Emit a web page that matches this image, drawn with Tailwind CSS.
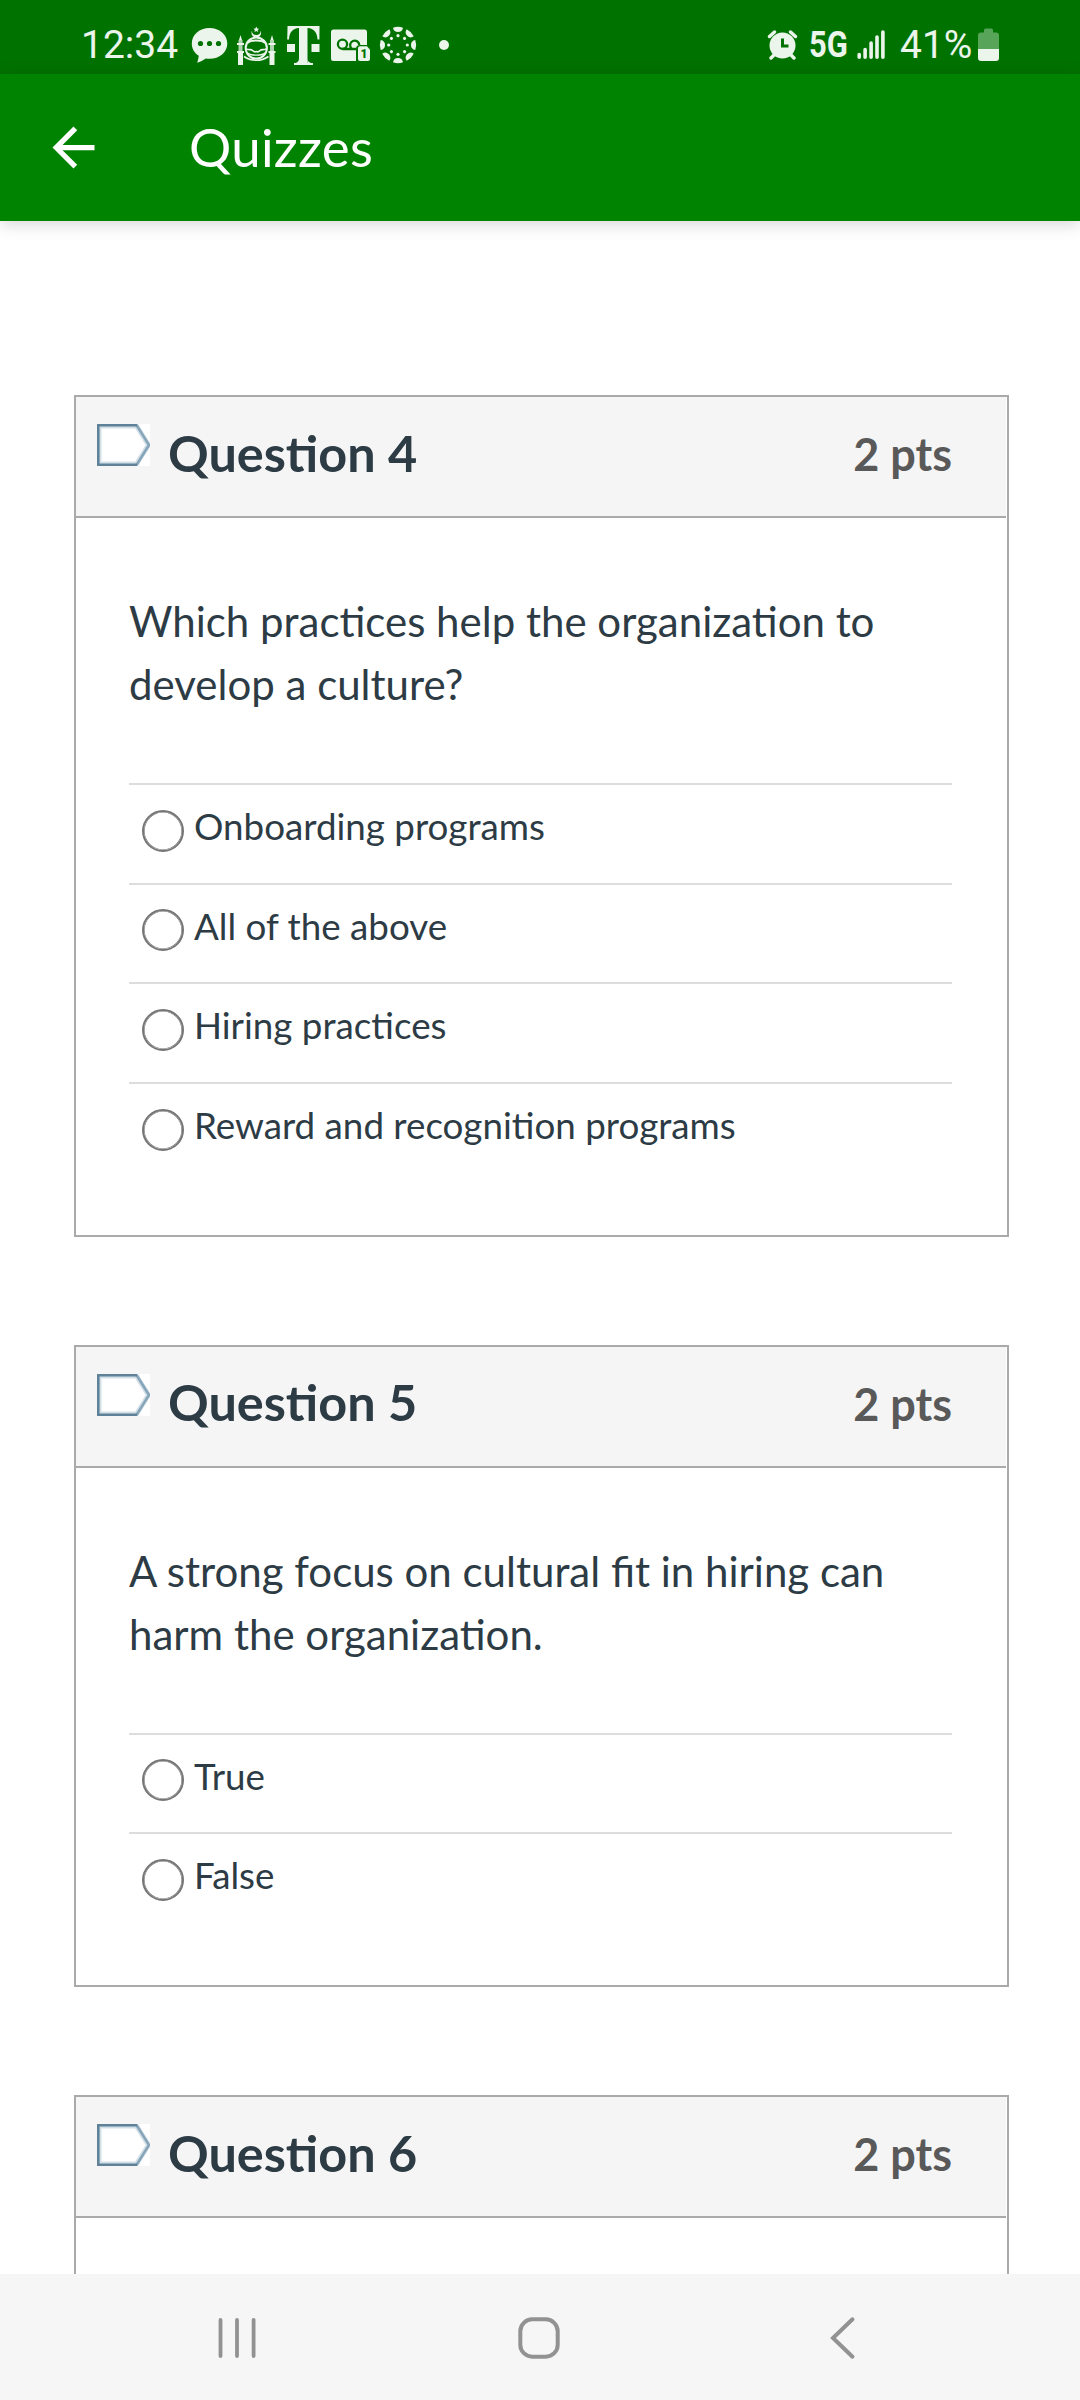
<!DOCTYPE html>
<html lang="en">
<head>
<meta charset="utf-8">
<title>Quizzes</title>
<script src="https://cdn.jsdelivr.net/npm/@tailwindcss/browser@4"></script>
</head>
<body class="bg-white">
<div class="flex h-[2400px] w-[1080px] flex-col overflow-hidden bg-white font-['Lato',sans-serif] text-[#2d3b45]">

  <!-- Status bar -->
  <div class="flex h-[74px] shrink-0 items-start bg-[#007200] font-['Roboto',sans-serif] text-[#ebf5eb]">
    <span class="ml-[81px] mt-[21px] w-[110px] whitespace-nowrap text-[39px] leading-[48px]">12:34</span>
    <svg class="mt-[27px] h-[37px] w-[37px] shrink-0" viewBox="0 0 37 37" fill="currentColor">
      <path d="M18.500 1C8.500 1 .8 7.500.8 16.500c0 5.500 2.700 9.500 7 12.200-.3 2.500-.8 4.700-1.600 7.100 3-.8 6-2.300 8.600-4.200 1.200.2 2.500.2 3.700.2 10 0 17.800-6.500 17.800-15.300S28.500 1 18.500 1z"/>
      <g fill="#007200"><circle cx="9.500" cy="16.500" r="2.600"/><circle cx="18.500" cy="16.500" r="2.600"/><circle cx="27.500" cy="16.500" r="2.600"/></g>
    </svg>
    <svg class="ml-[9px] mt-[26px] h-[40px] w-[39px] shrink-0" viewBox="0 0 39 40" fill="none" stroke="currentColor">
      <g fill="currentColor" stroke="none">
        <path d="M1 26h5v13H1zM32.500 26h5v13h-5z"/>
        <path d="M1.500 14h4v11h-4zM33 14h4v11h-4z" fill-opacity=".75"/>
        <path d="M0 17h7v2H0zM31.500 17h7v2h-7zM0 25h7v2H0zM31.500 25h7v2h-7z"/>
        <path d="M3.500 9l1.500 5H2zM35 9l1.500 5h-3z"/>
        <path d="M19.300 .5l.9 2 2 .2-1.500 1.400.5 2-1.900-1.100-1.900 1.100.5-2-1.500-1.400 2-.2z"/>
        <path d="M15 4.500c-1.500 4 .5 7 4.300 7s5.800-3 4.300-7c.2 3-1.600 4.500-4.300 4.500S14.800 7.500 15 4.500z"/>
      </g>
      <ellipse cx="19.300" cy="22" rx="10.600" ry="10.600" stroke-width="2"/>
      <path d="M10.500 17c3-3.500 14.600-3.500 17.600 0" stroke-width="2"/>
      <path d="M9 22.500c2.500 2.500 4.500 0 6.500 2s2.500 1.200 3.800 1.200 1.800.8 3.800-1.200 4 .5 6.500-2" stroke-width="1.700"/>
      <path d="M10 26.500c3 3.500 15.600 3.500 18.600 0" stroke-width="1.200"/>
      <path d="M7 30.500c7.500 5 17 5 24.500 0" stroke-width="1.600"/>
    </svg>
    <svg class="ml-[11px] mt-[26px] h-[39px] w-[33px] shrink-0" viewBox="0 0 33 39" fill="currentColor">
      <rect x=".5" y="0" width="32" height="2"/>
      <rect x="12" y="0" width="8.500" height="37"/>
      <rect x="7" y="37" width="19" height="2"/>
      <path d="M.5 2H12C5.500 2.500 2.500 6 2 13.500H.2zM32.500 2H20.500c6.500.5 9.500 4 10 11.500h1.900zM12 32c0 3.500-1.500 5-5 5h5zM20.500 32c0 3.500 1.500 5 5.500 5h-5.500z"/>
      <rect x="0" y="18" width="8" height="8"/>
      <rect x="24.500" y="18" width="8" height="8"/>
    </svg>
    <div class="relative ml-[11px] mt-[29px] h-[33px] w-[40px] shrink-0">
      <svg class="h-full w-full" viewBox="0 0 40 33" fill="currentColor">
        <path d="M2.500 .5h31a2.500 2.500 0 012.500 2.500V16H29a4 4 0 00-4 4v12H2.500a2.500 2.500 0 01-2.500-2.500V3a2.500 2.500 0 012.500-2.500z"/>
        <g fill="none" stroke="#007200" stroke-width="2.300"><circle cx="11.500" cy="15.300" r="4.600"/><path d="M11.500 20h14M20.500 19.500A4.600 4.600 0 1128.300 16"/></g>
        <path d="M29 17.300h7l3 3.500v9.200a2 2 0 01-2 2h-8a2 2 0 01-2-2V19.300a2 2 0 012-2z"/>
      </svg>
      <span class="absolute left-[28px] top-[18px] w-[10px] text-center text-[12px] font-black leading-[14px] text-[#007200]">1</span>
    </div>
    <svg class="ml-[8px] mt-[26px] h-[38px] w-[38px] shrink-0" viewBox="-19 -19 38 38" fill="currentColor">
      <g id="q"><path d="M-5-17.300Q0-19 5-17.300Q4.200-13 0-13T-5-17.300z"/><circle cx="0" cy="-9.300" r="1.600"/></g>
      <use href="#q" transform="rotate(45)"/><use href="#q" transform="rotate(90)"/><use href="#q" transform="rotate(135)"/><use href="#q" transform="rotate(180)"/><use href="#q" transform="rotate(225)"/><use href="#q" transform="rotate(270)"/><use href="#q" transform="rotate(315)"/>
    </svg>
    <span class="ml-[22px] mt-[40px] h-[10px] w-[10px] shrink-0 rounded-full bg-[#ebf5eb]"></span>
    <svg class="ml-auto mt-[29px] h-[31px] w-[31px] shrink-0" viewBox="0 0 31 31" fill="currentColor">
      <circle cx="15.500" cy="16.500" r="13"/>
      <path d="M2.500 7.500L7.500 3M28.500 7.500L23.500 3M4 29l4-4M27 29l-4-4" stroke="currentColor" stroke-width="3.400" stroke-linecap="round"/>
      <path d="M15.500 9.500v7.500h6" stroke="#007200" stroke-width="3" fill="none"/>
    </svg>
    <span class="ml-[11px] mt-[21px] w-[48px] whitespace-nowrap"><span class="inline-block origin-left scale-x-[0.86] text-[36px] font-bold leading-[48px]">5G</span></span>
    <svg class="mt-[29px] h-[31px] w-[29px] shrink-0" viewBox="0 0 29 31" stroke="currentColor" stroke-width="3.600" stroke-linecap="round">
      <path d="M2.200 25.500v2.700M8.100 20.500v7.700M14.100 14v14.200M20 8v20.200M25.900 3v25.200"/>
    </svg>
    <span class="ml-[14px] mt-[21px] w-[78px] whitespace-nowrap text-[39px] leading-[48px]">41%</span>
    <svg class="mr-[81px] mt-[28px] h-[33px] w-[21px] shrink-0" viewBox="0 0 21 33" fill="currentColor">
      <path d="M6 4.500V2a1.500 1.500 0 011.500-1.500h6A1.500 1.500 0 0115 2v2.500h3a3 3 0 013 3V21H0V7.500a3 3 0 013-3z" fill="#58a458"/>
      <path d="M0 21h21v9a3 3 0 01-3 3H3a3 3 0 01-3-3z"/>
    </svg>
  </div>

  <!-- App bar -->
  <div class="z-10 flex h-[147px] shrink-0 items-center bg-[#008300] text-white shadow-[0_3px_16px_rgba(0,0,0,0.17)]">
    <svg class="ml-[42px] h-[63px] w-[63px]" viewBox="0 0 24 24" fill="currentColor"><path d="M20 11H7.830l5.590-5.590L12 4l-8 8 8 8 1.410-1.410L7.830 13H20v-2z"/></svg>
    <h1 class="mb-[2px] ml-[84px] whitespace-nowrap text-[52.800px] leading-[64px] tracking-[0.3px]">Quizzes</h1>
  </div>

  <!-- Questions -->
  <main class="flex min-h-0 flex-1 flex-col gap-[108px] overflow-hidden pl-[74px] pr-[71px] pt-[174px]">

    <section class="h-[842px] shrink-0 border-2 border-[#aaa]">
      <div class="mr-px flex h-[121px] items-start border-b-2 border-[#aaa] bg-[#f5f5f5] pl-[21px] pr-[54px]">
        <svg class="mt-[27px] h-[42px] w-[53px]" viewBox="0 0 53 42"><path fill="#fff" d="M0 0h53v42H0z"/><path d="M2 2h37.500L51.500 21 39.500 40H2z" fill="none" stroke="#d3e0e8" stroke-width="5"/><path d="M39.500 1L52 21 39.500 41" fill="none" stroke="#86a5b8" stroke-width="2.500"/><path d="M40 1.300H1.300v39.400H40" fill="none" stroke="#5f8299" stroke-width="2.600"/></svg>
        <h2 class="ml-[18px] mt-[25px] whitespace-nowrap text-[50.400px] font-bold leading-[61px]">Question 4</h2>
        <span class="ml-auto mt-[27px] whitespace-nowrap text-[45px] font-bold leading-[60px] text-[#595959]">2 pts</span>
      </div>
      <div class="pl-[53px] pr-[55px] pt-[72px]">
        <p class="h-[193px] whitespace-nowrap text-[42px] leading-[63px]">Which practices help the organization to<br>develop a culture?</p>
        <label class="flex h-[100px] items-start border-t-2 border-[#ddd] pl-[13px]"><span class="mt-[25px] h-[42px] w-[42px] rounded-full border-2 border-[#767676] shadow-[inset_0_0_0_0.6px_#767676]"></span><span class="ml-[10px] mt-[16px] whitespace-nowrap text-[36.750px] leading-[50px]">Onboarding programs</span></label>
        <label class="flex h-[99px] items-start border-t-2 border-[#ddd] pl-[13px]"><span class="mt-[24px] h-[42px] w-[42px] rounded-full border-2 border-[#767676] shadow-[inset_0_0_0_0.6px_#767676]"></span><span class="ml-[10px] mt-[16px] whitespace-nowrap text-[36.750px] leading-[50px]">All of the above</span></label>
        <label class="flex h-[100px] items-start border-t-2 border-[#ddd] pl-[13px]"><span class="mt-[25px] h-[42px] w-[42px] rounded-full border-2 border-[#767676] shadow-[inset_0_0_0_0.6px_#767676]"></span><span class="ml-[10px] mt-[16px] whitespace-nowrap text-[36.750px] leading-[50px]">Hiring practices</span></label>
        <label class="flex h-[100px] items-start border-t-2 border-[#ddd] pl-[13px]"><span class="mt-[25px] h-[42px] w-[42px] rounded-full border-2 border-[#767676] shadow-[inset_0_0_0_0.6px_#767676]"></span><span class="ml-[10px] mt-[16px] whitespace-nowrap text-[36.750px] leading-[50px]">Reward and recognition programs</span></label>
      </div>
    </section>

    <section class="h-[642px] shrink-0 border-2 border-[#aaa]">
      <div class="mr-px flex h-[121px] items-start border-b-2 border-[#aaa] bg-[#f5f5f5] pl-[21px] pr-[54px]">
        <svg class="mt-[27px] h-[42px] w-[53px]" viewBox="0 0 53 42"><path fill="#fff" d="M0 0h53v42H0z"/><path d="M2 2h37.500L51.500 21 39.500 40H2z" fill="none" stroke="#d3e0e8" stroke-width="5"/><path d="M39.500 1L52 21 39.500 41" fill="none" stroke="#86a5b8" stroke-width="2.500"/><path d="M40 1.300H1.300v39.400H40" fill="none" stroke="#5f8299" stroke-width="2.600"/></svg>
        <h2 class="ml-[18px] mt-[24px] whitespace-nowrap text-[50.400px] font-bold leading-[61px]">Question 5</h2>
        <span class="ml-auto mt-[27px] whitespace-nowrap text-[45px] font-bold leading-[60px] text-[#595959]">2 pts</span>
      </div>
      <div class="pl-[53px] pr-[55px] pt-[72px]">
        <p class="h-[193px] whitespace-nowrap text-[42px] leading-[63px]">A strong focus on cultural fit in hiring can<br>harm the organization.</p>
        <label class="flex h-[99px] items-start border-t-2 border-[#ddd] pl-[13px]"><span class="mt-[24px] h-[42px] w-[42px] rounded-full border-2 border-[#767676] shadow-[inset_0_0_0_0.6px_#767676]"></span><span class="ml-[10px] mt-[16px] whitespace-nowrap text-[36.750px] leading-[50px]">True</span></label>
        <label class="flex h-[100px] items-start border-t-2 border-[#ddd] pl-[13px]"><span class="mt-[25px] h-[42px] w-[42px] rounded-full border-2 border-[#767676] shadow-[inset_0_0_0_0.6px_#767676]"></span><span class="ml-[10px] mt-[16px] whitespace-nowrap text-[36.750px] leading-[50px]">False</span></label>
      </div>
    </section>

    <section class="h-[642px] shrink-0 border-2 border-[#aaa]">
      <div class="mr-px flex h-[121px] items-start border-b-2 border-[#aaa] bg-[#f5f5f5] pl-[21px] pr-[54px]">
        <svg class="mt-[27px] h-[42px] w-[53px]" viewBox="0 0 53 42"><path fill="#fff" d="M0 0h53v42H0z"/><path d="M2 2h37.500L51.500 21 39.500 40H2z" fill="none" stroke="#d3e0e8" stroke-width="5"/><path d="M39.500 1L52 21 39.500 41" fill="none" stroke="#86a5b8" stroke-width="2.500"/><path d="M40 1.300H1.300v39.400H40" fill="none" stroke="#5f8299" stroke-width="2.600"/></svg>
        <h2 class="ml-[18px] mt-[25px] whitespace-nowrap text-[50.400px] font-bold leading-[61px]">Question 6</h2>
        <span class="ml-auto mt-[27px] whitespace-nowrap text-[45px] font-bold leading-[60px] text-[#595959]">2 pts</span>
      </div>
    </section>
  </main>

  <!-- Navigation bar -->
  <nav class="flex h-[126px] shrink-0 items-start bg-[#f6f6f6] pt-[42px] text-[#929292]">
    <svg class="ml-[217px] h-[44px] w-[40px]" viewBox="0 0 40 44" stroke="currentColor" stroke-width="3.800" stroke-linecap="round"><path d="M3.500 4v36M20 4v36M36.600 4v36"/></svg>
    <svg class="ml-[260px] h-[44px] w-[44px]" viewBox="0 0 44 44" fill="none" stroke="currentColor" stroke-width="4"><rect x="3.300" y="3.300" width="37.400" height="37.400" rx="12"/></svg>
    <svg class="ml-[268px] h-[44px] w-[28px]" viewBox="0 0 28 44" fill="none" stroke="currentColor" stroke-width="4" stroke-linecap="round"><path d="M23.500 3.300L4 22l19.500 18.700"/></svg>
  </nav>
</div>
</body>
</html>
